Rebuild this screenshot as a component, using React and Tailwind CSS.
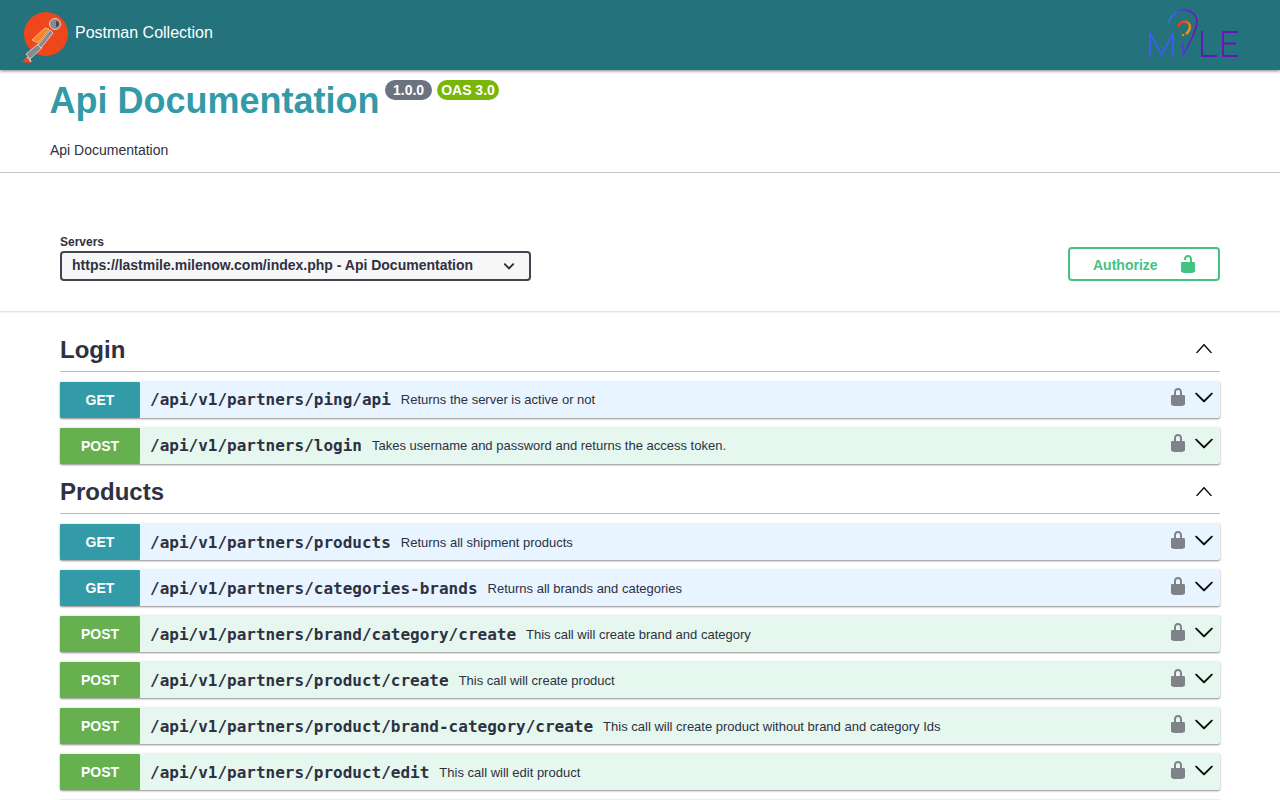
import { useId } from 'react';

const groups = [
  {
    name: 'Login',
    first: true,
    rows: [
      { method: 'GET', path: '/api/v1/partners/ping/api', text: 'Returns the server is active or not' },
      { method: 'POST', path: '/api/v1/partners/login', text: 'Takes username and password and returns the access token.' },
    ],
  },
  {
    name: 'Products',
    rows: [
      { method: 'GET', path: '/api/v1/partners/products', text: 'Returns all shipment products' },
      { method: 'GET', path: '/api/v1/partners/categories-brands', text: 'Returns all brands and categories' },
      { method: 'POST', path: '/api/v1/partners/brand/category/create', text: 'This call will create brand and category' },
      { method: 'POST', path: '/api/v1/partners/product/create', text: 'This call will create product' },
      { method: 'POST', path: '/api/v1/partners/product/brand-category/create', text: 'This call will create product without brand and category Ids' },
      { method: 'POST', path: '/api/v1/partners/product/edit', text: 'This call will edit product' },
    ],
  },
];

function PostmanLogo() {
  return (
    <svg width="46" height="52" viewBox="0 0 46 52" className="shrink-0 overflow-visible">
      <circle cx="22" cy="22" r="22" fill="#ef461c" />
      <path d="M-2 50 L3 44 L7 51 Z" fill="#ef461c" />
      <path d="M2 42 L14 32 L18 36 L6 47 Z" fill="#8a8a8a" stroke="#f1f1f1" strokeWidth="0.7" />
      <path d="M8 28 L21 16 L25 17 L14 31 Z" fill="#f6861f" stroke="#f8d8b0" strokeWidth="0.7" />
      <path d="M14 33 L26 18 L29 21 L17 36 Z" fill="#8a8a8a" stroke="#f1f1f1" strokeWidth="0.7" />
      <circle cx="31" cy="12" r="5.5" fill="#8a8a8a" stroke="#e8e8e8" strokeWidth="0.8" />
      <path d="M32 9 A3 3 0 0 1 32 15 Z" fill="#4a4a4a" />
      <path d="M6 47 L7 50 L3 45" fill="none" stroke="#f1f1f1" strokeWidth="0.8" />
    </svg>
  );
}

function MileLogo() {
  const id = useId();
  return (
    <svg width="96" height="50" viewBox="0 0 96 50">
      <defs>
        <linearGradient id={`${id}a`} x1="0" y1="0" x2="1" y2="0">
          <stop offset="0" stopColor="#2f78f5" />
          <stop offset="0.6" stopColor="#5a2ad0" />
          <stop offset="1" stopColor="#7010b8" />
        </linearGradient>
        <linearGradient id={`${id}b`} x1="0" y1="0" x2="1" y2="1">
          <stop offset="0" stopColor="#ee2a1a" />
          <stop offset="1" stopColor="#f8b01c" />
        </linearGradient>
      </defs>
      <path d="M2 48.5 V25 L13.5 47 L25 25 V48.5" fill="none" stroke="#3f5cff" strokeWidth="1.6" />
      <path d="M21 15 C22 8 29 2 36 2 C44 2 49 8 49 14 C49 22 42 34 35 47 V34" fill="none" stroke={`url(#${id}a)`} strokeWidth="1.5" />
      <path d="M30 19 C31 14 36 13 39 14 C43 16 43 22 38 26 M35 26 V28" fill="none" stroke={`url(#${id}b)`} strokeWidth="2.4" />
      <path d="M54 23 V48 H69" fill="none" stroke="#6414b8" strokeWidth="1.8" />
      <path d="M90 24 H75 V48 H90 M75 35.5 H88" fill="none" stroke="#7010b8" strokeWidth="1.8" />
    </svg>
  );
}

function Lock({ open, className }) {
  return (
    <svg width="20" height="20" viewBox="0 0 20 20" className={className} fill="currentColor">
      {open ? (
        <path d="M15.8 8H14V5.6C14 2.703 12.665 1 10 1 7.334 1 6 2.703 6 5.6V6h2v-.801C8 3.754 8.797 3 10 3c1.203 0 2 .754 2 2.199V8H4c-.553 0-1 .646-1 1.199V17c0 .549.428 1.139.951 1.307l1.197.387C5.672 18.861 6.55 19 7.1 19h5.8c.549 0 1.428-.139 1.951-.307l1.196-.387c.524-.167.953-.757.953-1.306V9.199C17 8.646 16.352 8 15.8 8z" />
      ) : (
        <path d="M15.8 8H14V5.6C14 2.703 12.665 1 10 1 7.334 1 6 2.703 6 5.6V8H4c-.553 0-1 .646-1 1.199V17c0 .549.428 1.139.951 1.307l1.197.387C5.672 18.861 6.55 19 7.1 19h5.8c.549 0 1.428-.139 1.951-.307l1.196-.387c.524-.167.953-.757.953-1.306V9.199C17 8.646 16.352 8 15.8 8zM12 8H8V5.199C8 3.754 8.797 3 10 3c1.203 0 2 .754 2 2.199V8z" />
      )}
    </svg>
  );
}

function Arrow({ up }) {
  return (
    <svg width="20" height="20" viewBox="0 0 20 20" fill="currentColor" stroke="currentColor" strokeWidth="0.4" className="text-black">
      {up ? (
        <path d="M17.418 14.908c-.189.211-.487.211-.677 0L10 7.383l-6.741 7.525c-.19.211-.488.211-.677 0-.19-.21-.19-.554 0-.765l7.079-7.9c.189-.211.488-.211.677 0l7.08 7.9c.19.211.19.555 0 .765z" />
      ) : (
        <path d="M17.418 6.109c.272-.268.709-.268.979 0s.271.701 0 .969l-7.908 7.83c-.27.268-.707.268-.979 0l-7.908-7.83c-.27-.268-.27-.701 0-.969.271-.268.709-.268.979 0L10 13.25l7.418-7.141z" />
      )}
    </svg>
  );
}

function Row({ row, first }) {
  const isGet = row.method === 'GET';
  return (
    <div className={`flex items-center h-[37px] mb-[9px] rounded-[2px] shadow-[0_1px_2px_rgba(0,0,0,0.45)] ${isGet ? 'bg-[#e8f4ff]' : 'bg-[#e6f7ef]'}`}>
      <div className={`w-20 h-[36px] mt-px flex items-center justify-center rounded-[1px] text-white text-sm font-bold ${isGet ? 'bg-[#339aa7]' : 'bg-[#66b04f]'}`}>
        {row.method}
      </div>
      <span className={`pl-2.5 pr-2.5 text-base font-bold text-[#2d3142] font-['DejaVu_Sans_Mono',monospace] whitespace-nowrap ${first ? '' : 'mt-[2px]'}`}>{row.path}</span>
      <span className={`flex-1 text-[13px] text-[#2d3142] whitespace-nowrap ${first ? '' : 'mt-[2px]'}`}>{row.text}</span>
      <Lock className={`text-[#7f8288] mr-[6px] ${first ? 'mb-[6px]' : 'mb-1'}`} />
      <div className={`mr-[6px] ${first ? 'mb-[6px]' : 'mb-1'}`}>
        <Arrow />
      </div>
    </div>
  );
}

function Group({ group }) {
  return (
    <section>
      <div className={`flex items-center justify-between border-b border-[#b9bbc0] h-[44px] mb-[9px] ${group.first ? '' : 'mt-[-3px]'}`}>
        <h3 className="text-2xl font-bold text-[#2d3142]">{group.name}</h3>
        <div className={`mr-[6px] ${group.first ? 'mb-1' : 'mb-[2px]'}`}>
          <Arrow up />
        </div>
      </div>
      {group.rows.map((row) => (
        <Row key={row.path} row={row} first={group.first} />
      ))}
    </section>
  );
}

export default function App() {
  return (
    <div className="h-[800px] overflow-hidden bg-white font-['Liberation_Sans',Arial,sans-serif]">
      <header className="relative z-10 h-[70px] bg-[#24727c] shadow-[0_1px_3px_rgba(0,0,0,0.5)] flex items-start justify-between pl-6 pr-9">
        <div className="flex items-start gap-[5px] pt-3">
          <PostmanLogo />
          <span className="mt-[9px] text-white text-base leading-6">Postman Collection</span>
        </div>
        <div className="mt-2">
          <MileLogo />
        </div>
      </header>

      <div className="h-[103px] border-b border-[#c4c5c8] pl-[50px]">
        <div className="flex items-start h-[61px]">
          <h2 className="ml-[-0.5px] mt-[9px] text-[36px] leading-[43px] font-bold text-[#339aa7]">Api Documentation</h2>
          <span className="ml-[5.5px] mt-[10px] h-5 px-2 rounded-[10px] bg-[#6b7280] text-white text-sm leading-5 font-bold">1.0.0</span>
          <span className="ml-[5px] mt-[10px] h-5 px-1 rounded-[10px] bg-[#78b60a] text-white text-sm leading-5 font-bold">OAS 3.0</span>
        </div>
        <p className="mt-[9px] text-sm leading-[20px] text-[#2d3142]">Api Documentation</p>
      </div>

      <div className="h-[139px] border-b border-[#e2e2e3] shadow-[0_1px_1px_rgba(0,0,0,0.04)] px-[60px] pt-[62px] flex items-start justify-between">
        <div>
          <div className="text-xs leading-[14px] font-bold text-[#2d3142] mb-[2px]">Servers</div>
          <div className="w-[471px] h-[30px] border-2 border-[#41444e] rounded-[4px] bg-[#f7f7f7] flex items-center justify-between pl-[10px] pr-[14px]">
            <span className="mb-[2px] text-sm font-bold text-[#2d3142]">https://lastmile.milenow.com/index.php - Api Documentation</span>
            <svg width="12" height="12" viewBox="0 0 20 20" fill="none" stroke="#1f2937" strokeWidth="3" strokeLinecap="round">
              <path d="M3 7 L10 14 L17 7" />
            </svg>
          </div>
        </div>
        <div className="mt-3 w-[152px] h-[34px] border-2 border-[#41c482] rounded-[4px] flex items-center pl-[23px]">
          <span className="mt-[2px] text-sm font-bold text-[#41c482]">Authorize</span>
          <Lock open className="ml-5 text-[#41c482]" />
        </div>
      </div>

      <main className="px-[60px] pt-4">
        {groups.map((group) => (
          <Group key={group.name} group={group} />
        ))}
        <div className="border-t border-[#eeeeee]" />
      </main>
    </div>
  );
}
